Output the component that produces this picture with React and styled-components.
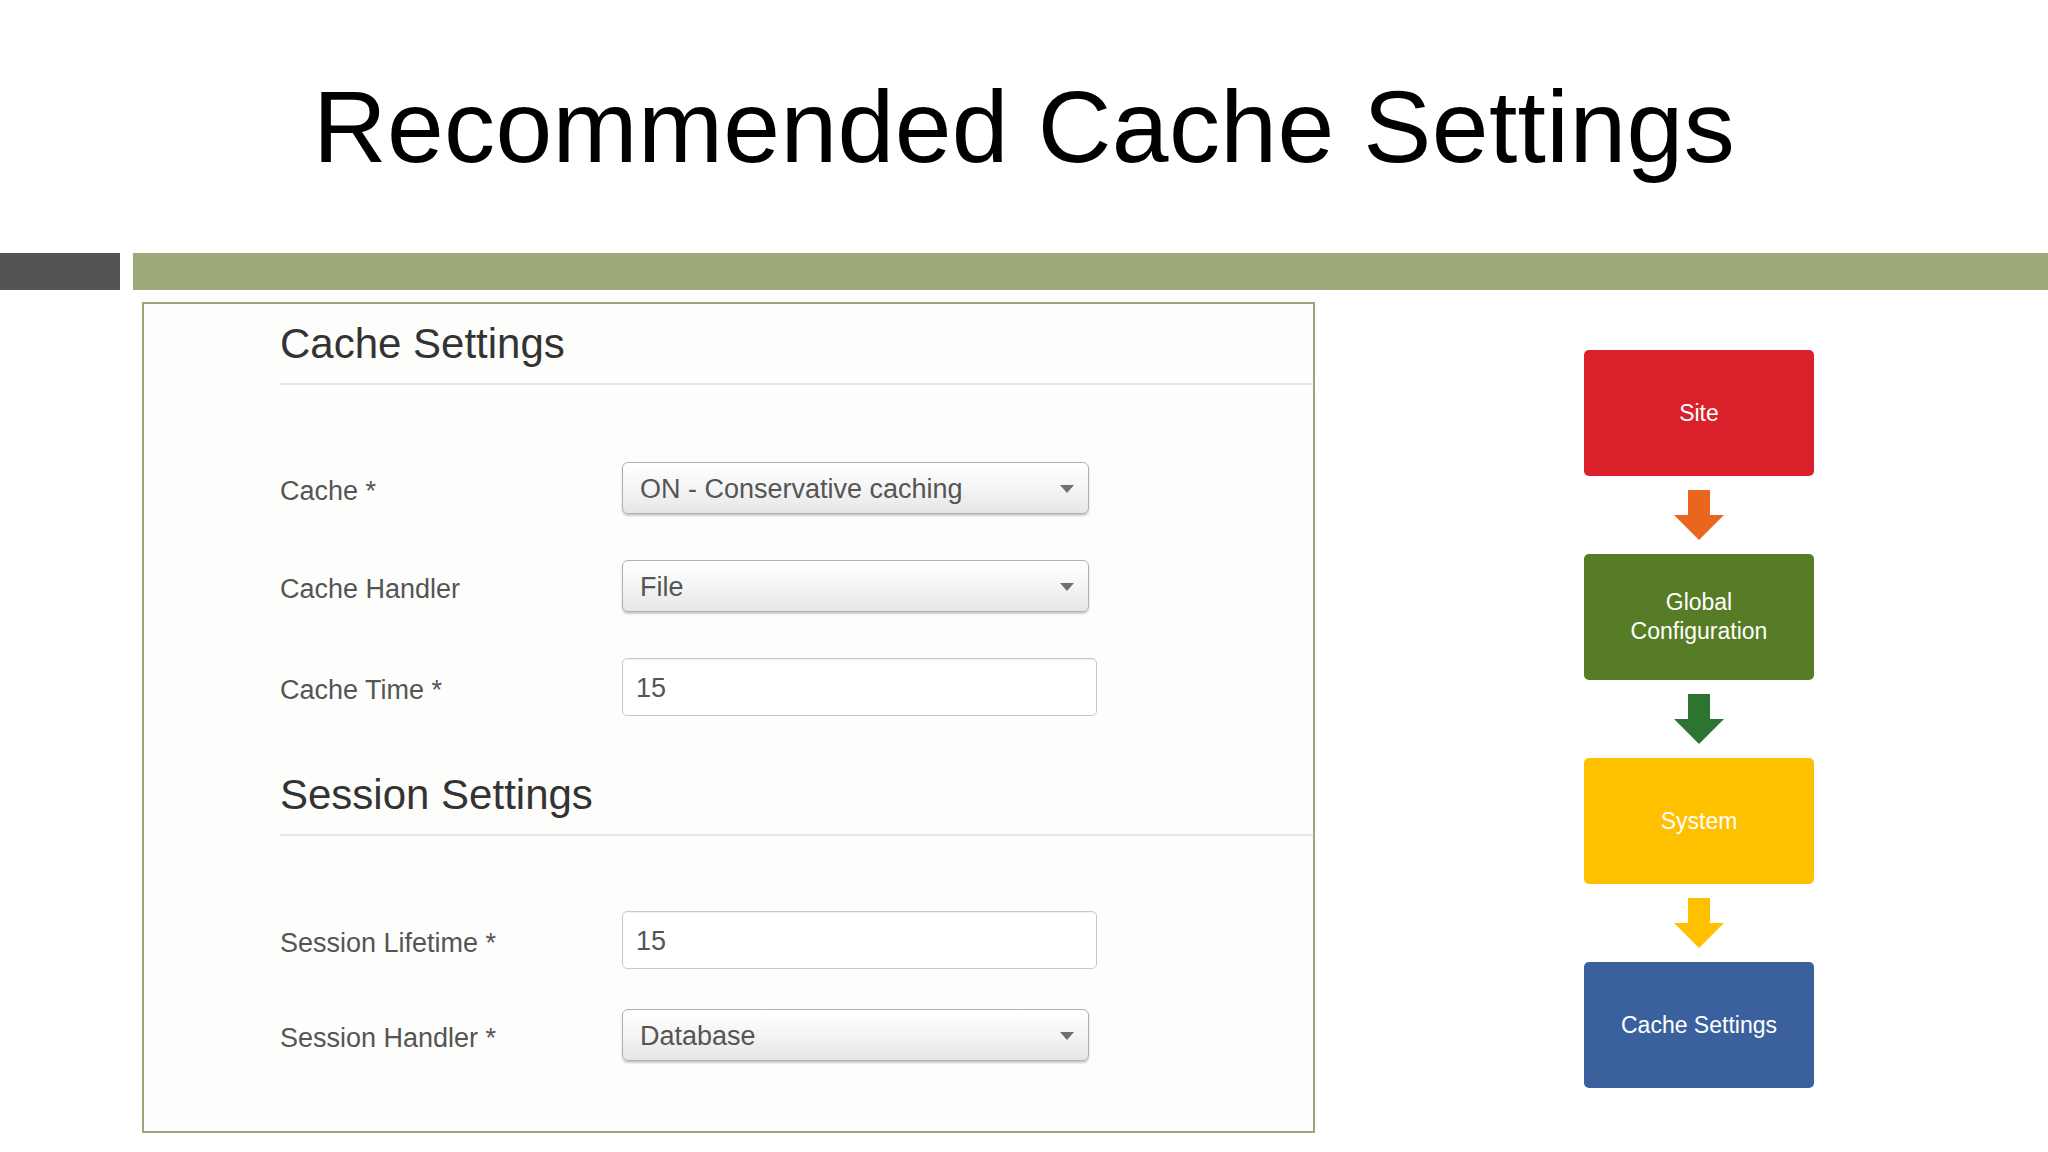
import React from "react";
import styled, { createGlobalStyle } from "styled-components";

const GlobalStyle = createGlobalStyle`
  html, body { margin: 0; padding: 0; background: #ffffff; }
  body { font-family: "Liberation Sans", Arial, sans-serif; }
  * { box-sizing: border-box; }
`;

const Slide = styled.div`
  width: 2048px;
  height: 1152px;
  overflow: hidden;
  display: flex;
  flex-direction: column;
  background: #ffffff;
`;

const Title = styled.h1`
  margin: 76px 0 0;
  height: 102px;
  font-family: "Liberation Sans", Arial, sans-serif;
  font-size: 102px;
  line-height: 102px;
  font-weight: 400;
  text-align: center;
  color: #000000;
  letter-spacing: 0.4px;
`;

const BarRow = styled.div`
  display: flex;
  gap: 13px;
  margin-top: 75px;
  height: 37px;
`;

const Bar = styled.div`
  height: 100%;
  background: ${(p) => p.$color};
  width: ${(p) => (p.$width ? `${p.$width}px` : "auto")};
  flex: ${(p) => (p.$grow ? 1 : "none")};
`;

const Content = styled.div`
  display: flex;
  align-items: flex-start;
  margin-top: 12px;
`;

const Panel = styled.section`
  margin-left: 142px;
  width: 1173px;
  height: 831px;
  border: 2px solid #9ba679;
  background: #fdfdfc;
  padding: 17px 0 0 136px;
`;

const Legend = styled.h2`
  margin: ${(p) => p.$top}px 0 0;
  font-size: 42px;
  line-height: 46px;
  font-weight: 400;
  color: #333333;
  padding-bottom: 16px;
  border-bottom: 2px solid #e7e7e7;
`;

const Fields = styled.div`
  display: flex;
  flex-direction: column;
  gap: ${(p) => p.$gap}px;
  padding-top: ${(p) => p.$top}px;
`;

const Row = styled.div`
  display: flex;
  align-items: center;
`;

const Label = styled.label`
  width: 342px;
  padding-top: 6px;
  font-size: 27px;
  color: #555555;
  white-space: nowrap;
`;

const Select = styled.div`
  width: 467px;
  height: 52px;
  border: 1px solid #b0b0b0;
  border-radius: 6px;
  background: linear-gradient(#ffffff 0%, #f6f6f6 45%, #e6e6e6 100%);
  box-shadow: 0 2px 2px rgba(0, 0, 0, 0.2);
  padding: 2px 14px 0 17px;
  display: flex;
  align-items: center;
  justify-content: space-between;
  font-size: 27px;
  color: #555555;
`;

const Caret = styled.span`
  width: 0;
  height: 0;
  border-left: 7px solid transparent;
  border-right: 7px solid transparent;
  border-top: 8px solid #707070;
`;

const Input = styled.div`
  width: 475px;
  height: 58px;
  border: 1px solid #c8c8c8;
  border-radius: 5px;
  background: #ffffff;
  box-shadow: inset 0 1px 1px rgba(0, 0, 0, 0.06);
  padding: 2px 0 0 13px;
  display: flex;
  align-items: center;
  font-size: 27px;
  color: #555555;
`;

const Flow = styled.div`
  margin-left: 269px;
  padding-top: 48px;
  width: 230px;
  display: flex;
  flex-direction: column;
`;

const Box = styled.div`
  height: 126px;
  border-radius: 5px;
  background: ${(p) => p.$color};
  display: flex;
  align-items: center;
  justify-content: center;
  text-align: center;
  color: #ffffff;
  font-size: 23px;
  line-height: 29px;
`;

const ArrowSlot = styled.div`
  height: 78px;
  display: flex;
  align-items: center;
  justify-content: center;
`;

const Arrow = ({ color }) => (
  <ArrowSlot>
    <svg width="50" height="50" viewBox="0 0 50 50">
      <polygon points="14,0 36,0 36,25 50,25 25,50 0,25 14,25" fill={color} />
    </svg>
  </ArrowSlot>
);

const SelectField = ({ label, value }) => (
  <Row>
    <Label>{label}</Label>
    <Select>
      <span>{value}</span>
      <Caret />
    </Select>
  </Row>
);

const TextField = ({ label, value }) => (
  <Row>
    <Label>{label}</Label>
    <Input>{value}</Input>
  </Row>
);

export default function App() {
  return (
    <>
      <GlobalStyle />
      <Slide>
        <Title>Recommended Cache Settings</Title>
        <BarRow>
          <Bar $color="#545454" $width={120} />
          <Bar $color="#9caa79" $grow />
        </BarRow>
        <Content>
          <Panel>
            <Legend $top={0}>Cache Settings</Legend>
            <Fields $top={77} $gap={46}>
              <SelectField label="Cache *" value="ON - Conservative caching" />
              <SelectField label="Cache Handler" value="File" />
              <TextField label="Cache Time *" value="15" />
            </Fields>
            <Legend $top={56}>Session Settings</Legend>
            <Fields $top={75} $gap={40}>
              <TextField label="Session Lifetime *" value="15" />
              <SelectField label="Session Handler *" value="Database" />
            </Fields>
          </Panel>
          <Flow>
            <Box $color="#d9202b">Site</Box>
            <Arrow color="#e8661d" />
            <Box $color="#567c25">
              Global
              <br />
              Configuration
            </Box>
            <Arrow color="#2e7431" />
            <Box $color="#ffc000">System</Box>
            <Arrow color="#ffc000" />
            <Box $color="#3a619d">Cache Settings</Box>
          </Flow>
        </Content>
      </Slide>
    </>
  );
}
